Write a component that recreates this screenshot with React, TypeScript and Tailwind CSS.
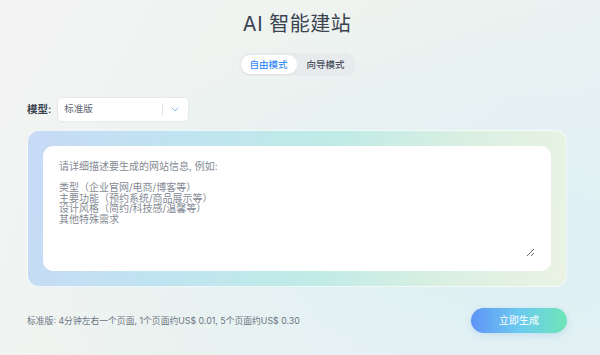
import React from "react";

export default function App() {
  const placeholder =
    "请详细描述要生成的网站信息, 例如:\n\n类型（企业官网/电商/博客等）\n主要功能（预约系统/商品展示等）\n设计风格（简约/科技感/温馨等）\n其他特殊需求";
  return (
    <div
      className="w-[600px] h-[355px] overflow-hidden flex flex-col pl-[27px] pr-[33px] pt-[10px] bg-[radial-gradient(ellipse_at_85%_70%,#dcf0f4_0%,rgba(225,240,244,0.6)_35%,rgba(242,244,243,0)_70%),linear-gradient(120deg,#f3f4f3_0%,#eef3ef_45%,#e6f0f3_100%)]"
      style={{ fontFamily: 'Inter, "Noto Sans CJK SC", sans-serif' }}
    >
      <h1 className="text-center text-[20px] leading-[28px] text-[#3a4350] font-normal tracking-[0.5px]">
        AI 智能建站
      </h1>

      <div className="flex justify-center mt-[15px]">
        <div className="flex items-center rounded-full bg-[#e8ebee] p-[2px] gap-[1px]">
          <button className="w-[56px] h-[19px] rounded-full bg-white text-[9.5px] leading-none text-[#3b8ef5] font-medium shadow-[0_1px_2px_rgba(0,0,0,0.04)]">
            自由模式
          </button>
          <button className="w-[56px] h-[19px] rounded-full text-[9.5px] leading-none text-[#4b5260] font-medium">
            向导模式
          </button>
        </div>
      </div>

      <div className="flex items-center mt-[21px] gap-[6px]">
        <span className="text-[10.5px] text-[#3a4350] font-semibold">模型:</span>
        <div className="w-[132px] h-[25px] rounded-[5px] bg-white border border-[#e6e9ed] flex items-center pl-[6px] pr-[9px]">
          <span className="text-[9.5px] text-[#5e6673] flex-1">标准版</span>
          <span className="w-px h-[13px] bg-[#e5e7eb] mr-[8px]" />
          <svg width="8" height="5" viewBox="0 0 8 5" fill="none">
            <path d="M0.8 0.8 L4 4 L7.2 0.8" stroke="#8cbcf0" strokeWidth="1" strokeLinecap="round" strokeLinejoin="round" />
          </svg>
        </div>
      </div>

      <div className="mt-[8px] h-[157px] rounded-[12px] p-[15px] border border-white/70 bg-[linear-gradient(100deg,#c7daf6_0%,#bfe5f0_30%,#c0ebe6_55%,#dcf0e2_80%,#eaf3e3_100%)]">
        <div className="h-full rounded-[10px] bg-white pt-[12px] pl-[12px] pr-[16px] pb-[14px]">
          <textarea
            className="w-full h-full bg-transparent outline-none px-[4px] py-[3px] text-[10px] leading-[10.5px] text-[#4b5260] placeholder:text-[#848a94] resize-y"
            placeholder={placeholder}
          />
        </div>
      </div>

      <div className="flex items-center justify-between mt-[21px]">
        <span className="text-[8.8px] text-[#6b7482]">
          标准版: 4分钟左右一个页面, 1个页面约US$ 0.01, 5个页面约US$ 0.30
        </span>
        <button className="w-[96px] h-[25px] rounded-full bg-[linear-gradient(90deg,#5f94f6_0%,#6ccaf0_50%,#6ee6b8_100%)] text-white/85 text-[10px] font-medium shadow-[0_2px_6px_rgba(100,170,230,0.25)]">
          立即生成
        </button>
      </div>
    </div>
  );
}
